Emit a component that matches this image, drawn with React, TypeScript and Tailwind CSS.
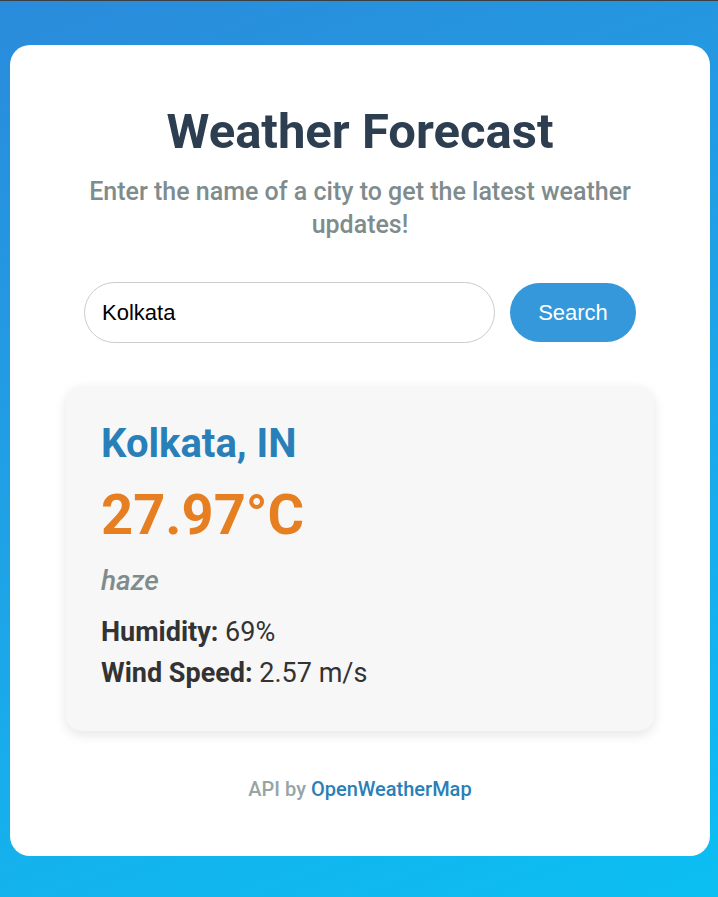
export default function App() {
  return (
    <div
      className="min-h-[897px] border-t border-[#3a3f44] bg-[linear-gradient(160deg,#2a8bdb_0%,#1ea4e6_50%,#0bbff3_100%)] px-[10px] pt-[44px] pb-[41px]"
      style={{ fontFamily: "Roboto, 'Noto Sans', sans-serif" }}
    >
      <div className="mx-auto flex h-[811px] w-[700px] flex-col items-center rounded-[20px] bg-white pt-[52px]">
        <h1 className="text-[49px] leading-[70px] font-bold text-[#2c3e50]">Weather Forecast</h1>
        <p className="mt-[8px] w-[580px] text-center text-[25px] leading-[33px] font-medium text-[#7f8c8d]">
          Enter the name of a city to get the latest weather updates!
        </p>

        <div className="mt-[41px] flex w-[552px] items-center gap-[15px]">
          <input
            defaultValue="Kolkata"
            className="h-[61px] flex-1 rounded-full border border-[#cccccc] px-[17px] text-[22px] text-black outline-none"
            style={{ fontFamily: "'Liberation Sans', Arial, sans-serif" }}
          />
          <button
            className="h-[59px] w-[126px] rounded-full bg-[#3498db] text-[22px] text-white"
            style={{ fontFamily: "'Liberation Sans', Arial, sans-serif" }}
          >
            Search
          </button>
        </div>

        <div className="mt-[43px] w-[588px] rounded-[15px] bg-[#f7f7f7] px-[35px] pt-[31px] pb-[37px] shadow-[0_4px_12px_rgba(0,0,0,0.1)]">
          <h2 className="text-[40px] leading-[54px] font-bold text-[#2980b9]">Kolkata, IN</h2>
          <div className="mt-[9px] text-[56px] leading-[70px] font-bold text-[#e67e22]">27.97°C</div>
          <p className="mt-[12px] text-[28px] leading-[38px] font-medium italic text-[#7f8c8d]">haze</p>
          <p className="mt-[12px] text-[27px] leading-[41px] text-[#333333]">
            <span className="font-bold">Humidity:</span> 69%
          </p>
          <p className="text-[27px] leading-[41px] text-[#333333]">
            <span className="font-bold">Wind Speed:</span> 2.57 m/s
          </p>
        </div>

        <p className="mt-[43px] text-[20px] font-medium text-[#95a5a6]">
          API by <a className="text-[#2980b9]">OpenWeatherMap</a>
        </p>
      </div>
    </div>
  );
}
